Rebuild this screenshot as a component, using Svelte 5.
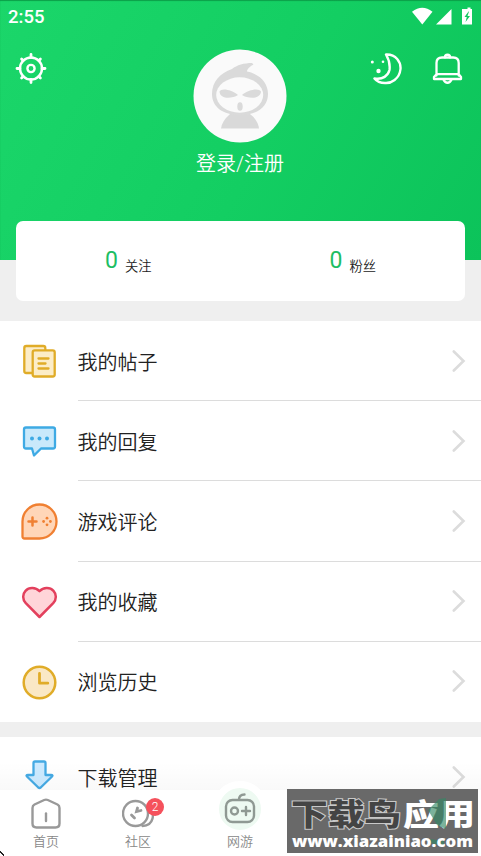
<script lang="ts">
  type Item = { icon: string; label: string };

  const items: Item[] = [
    { icon: 'posts', label: '我的帖子' },
    { icon: 'reply', label: '我的回复' },
    { icon: 'review', label: '游戏评论' },
    { icon: 'heart', label: '我的收藏' },
    { icon: 'history', label: '浏览历史' }
  ];
  const more: Item[] = [{ icon: 'download', label: '下载管理' }];
  const stats = [
    { value: 0, label: '关注' },
    { value: 0, label: '粉丝' }
  ];
</script>

{#snippet row(item: Item)}
  <div class="item">
    <svg class="item-icon" width="40" height="40" viewBox="0 0 40 40" fill="none" stroke-width="2.3" stroke-linecap="round" stroke-linejoin="round">
      {#if item.icon === 'posts'}
        <g stroke="#e0ac28" fill="#fcedc8">
          <rect x="4.300" y="5" width="21" height="27" rx="2" />
          <rect x="12.700" y="9.300" width="22" height="26.200" rx="2" />
          <path d="M18.500 17.500h10M18.500 22.500h7M18.500 27.500h10" stroke-width="2.3" />
        </g>
      {:else if item.icon === 'reply'}
        <path d="M6 6.500h27q2 0 2 2v17q0 2-2 2H21L14 34.500l-2-7H6q-2 0-2-2v-17q0-2 2-2z" fill="#c9e9fb" stroke="#3eaae4" />
        <g fill="#3eaae4"><circle cx="12" cy="17.500" r="2" /><circle cx="19.500" cy="17.500" r="2" /><circle cx="27" cy="17.500" r="2" /></g>
      {:else if item.icon === 'review'}
        <path d="M2.500 20.500a17 17 0 1 1 17 17h-15q-2 0-2-2z" fill="#ffd6b8" stroke="#f08032" />
        <path d="M8.500 20.500h8M12.500 16.500v8" stroke="#f08032" stroke-width="2.500" />
        <g fill="#f08032"><circle cx="27" cy="17.200" r="1.400" /><circle cx="27" cy="23.800" r="1.400" /><circle cx="23.600" cy="20.500" r="1.400" /><circle cx="30.400" cy="20.500" r="1.400" /></g>
      {:else if item.icon === 'heart'}
        <path d="M19.500 35L5.800 21.200C2.200 17.200 2.500 12 5.500 8.800C9.300 4.900 15.600 5.300 19.500 9.200C23.400 5.300 29.700 4.900 33.500 8.800C36.500 12 36.800 17.200 33.200 21.200z" fill="#ffd5d9" stroke="#e3405d" stroke-width="2.500" />
      {:else if item.icon === 'history'}
        <circle cx="19.500" cy="20.500" r="15.800" fill="#fae8c5" stroke="#e0ac28" stroke-width="2.500" />
        <path d="M19.500 11.500v9.700h8.300" stroke="#e0ac28" stroke-width="2.800" />
      {:else}
        <path d="M15 4.500h9q1.500 0 1.500 1.500v12H31q2.500 0 .8 1.700L20.700 30.500q-1.200 1-2.400 0L7.200 19.700Q5.500 18 8 18h5.500V6q0-1.500 1.500-1.500z" fill="#cdeaff" stroke="#45aae4" />
      {/if}
    </svg>
    <div class="item-main">
      <span>{item.label}</span>
      <svg class="arrow" width="14" height="24" viewBox="0 0 14 24" fill="none" stroke="#dcdcdc" stroke-width="2.600" stroke-linecap="round">
        <path d="M1.800 2.500L11.500 12L1.800 21.500" />
      </svg>
    </div>
  </div>
{/snippet}

<div class="page">
  <header class="hero">
    <div class="status">
      <span>2:55</span>
      <svg width="61" height="18" viewBox="0 0 61 18" fill="#fff">
        <path d="M0 3.700Q10.300-4 20.500 3.700L10.300 16.500z" />
        <path d="M39.500 1v15.500H24z" />
        <path d="M52 1h3.500v-1.500h3V1h1.500v15.500H50V1z" />
        <path d="M56.500 3.500L52.500 9h2.300L53.500 14l4.500-6h-2.500l1.500-4.500z" fill="#12c860" />
      </svg>
    </div>

    <div class="top">
      <svg class="gear" width="32" height="32" viewBox="0 0 32 32" fill="none" stroke="#fff" stroke-width="2.400" stroke-linecap="round">
        <circle cx="16" cy="15.500" r="11" />
        <circle cx="16" cy="15.500" r="3.600" />
        <path d="M16 4.500V1.500M16 26.500v3M5 15.500H2M27 15.500h3M8.200 7.700L6.600 6.100M23.800 7.700l1.600-1.600M8.200 23.300l-1.600 1.600M23.800 23.300l1.600 1.600" stroke-width="2.800" />
      </svg>

      <div class="user">
        <svg width="94" height="94" viewBox="0 0 94 94">
          <circle cx="47" cy="47" r="46.500" fill="#fafafa" />
          <path d="M28 79.500Q29 72 37 65h20Q65 71 66 79.500z" fill="#d9d9d9" />
          <path d="M59 14C51 14 44 16 39 20C27 24 19 33 19 45C19 58 30 66 47 66S75 58 75 45C75 34 67 25 54 22.500C54 20 57 17.500 60.500 15.500z" fill="#dadada" />
          <ellipse cx="46.700" cy="46" rx="23.500" ry="17.700" fill="#fafafa" />
          <path d="M26.500 42.500C28 38.500 39 40.500 45 46C39 50 27 50.500 26.500 42.500zM68 42.500C66 38.500 55 40.500 49 46C55 50 67.500 50.500 68 42.500z" fill="#dadada" />
          <ellipse cx="47" cy="57.500" rx="2.700" ry="4.300" fill="#dadada" />
        </svg>
        <span>登录/注册</span>
      </div>

      <div class="tools">
        <svg width="32" height="32" viewBox="0 0 32 32" fill="none" stroke="#fff" stroke-width="2.400" stroke-linecap="round" stroke-linejoin="round">
          <path d="M16 1.500C26 1 31 9 30.500 16C29.500 26 21 30.500 15 30Q8 30 4.500 25.500C13 27 18 22.500 19.500 17Q20.500 9 16 1.500z" />
          <g fill="#fff" stroke="none"><circle cx="2.300" cy="9" r="1.500" /><circle cx="13" cy="8.800" r="1.300" /><circle cx="8.500" cy="18" r="2.200" /></g>
        </svg>
        <svg width="32" height="32" viewBox="0 0 32 32" fill="none" stroke="#fff" stroke-width="2.300" stroke-linecap="round" stroke-linejoin="round">
          <path d="M4.500 22.500V10q0-5.500 5.500-5.500h11.200q5.500 0 5.500 5.500v12.500M4.500 21.200h22.200M4.500 21.200L2 24v2h27v-2l-2.300-2.800" />
          <path d="M13 4.200q0-2.500 2.500-2.500t2.500 2.500M11.500 26.500q1.500 3.200 4 3.200t4-3.200" stroke-width="2.400" />
        </svg>
      </div>
    </div>
  </header>

  <section class="stats">
    {#each stats as stat}
      <div class="stat"><b>{stat.value}</b><span>{stat.label}</span></div>
    {/each}
  </section>

  <section class="list">
    {#each items as item}
      {@render row(item)}
    {/each}
  </section>
  <section class="list">
    {#each more as item}
      {@render row(item)}
    {/each}
  </section>

  <nav class="nav">
    <div class="fade"></div>
    <div class="bar">
      <div class="tab">
        <svg width="32" height="32" viewBox="0 0 32 32" fill="none" stroke="#999" stroke-width="2.400" stroke-linecap="round" stroke-linejoin="round">
          <path d="M14.200 2L4.500 6.500Q2.500 7.500 2.500 10V25.500q0 4 4 4h19q4 0 4-4V10Q29.500 7.500 27.500 6.500L17.800 2q-1.800-.8-3.600 0z" />
          <path d="M16 15.500v7.500" />
        </svg>
        <span>首页</span>
      </div>
      <div class="tab">
        <svg width="32" height="32" viewBox="0 0 32 32" fill="none" stroke="#999" stroke-width="2.400" stroke-linecap="round">
          <path d="M27 9.500C33.500 15 32 27.500 20.500 28" />
          <circle cx="13.500" cy="15.500" r="12.500" fill="#fff" />
          <path d="M9.500 17l3 3M15.500 10l-1 3.500 4.500-1" stroke-width="2.800" />
        </svg>
        <span>社区</span>
        <i class="badge">2</i>
      </div>
      <div class="tab game">
        <div class="bubble"></div>
        <svg width="32" height="32" viewBox="0 0 32 32" fill="none" stroke="#8f9993" stroke-width="2.400" stroke-linecap="round">
          <rect x="2" y="8" width="28" height="22" rx="6.500" fill="#eefaf2" />
          <path d="M15 7.500c0-3 1.500-5 5.500-5M22 15v8M18 19h8" />
          <circle cx="10.500" cy="19" r="3.500" />
        </svg>
        <span>网游</span>
      </div>
    </div>
  </nav>

  <div class="mark">
    <svg width="191" height="64" viewBox="0 0 191 64">
      <g class="mark-title">
        <text x="4" y="36" textLength="110" lengthAdjust="spacingAndGlyphs" fill="#444" stroke="#c8c8c8" stroke-width="2" paint-order="stroke">下载鸟</text>
        <text x="116" y="36" textLength="72" lengthAdjust="spacingAndGlyphs" fill="#fff">应用</text>
      </g>
      <path d="M141 21l11-11 7-1v31l-9-4zM143 50l14 2v5l-14-3z" fill="#348866" opacity=".65" />
      <text class="mark-url" x="5" y="58" textLength="181" lengthAdjust="spacingAndGlyphs" fill="#fff">www.xiazainiao.com</text>
    </svg>
  </div>
  <svg class="corner" width="5" height="5" viewBox="0 0 5 5"><path d="M0 0h1v1h1v1h1v1h1v2h-1v-1h-1v-1h-1v-1h-1z" fill="#222" /></svg>
</div>

<style>
  :global(body) { margin: 0; overflow: hidden; }
  .page { position: relative; box-sizing: border-box; height: 856px; overflow: hidden; background: #efefef; color: #222; font-family: Roboto, "Noto Sans CJK SC", sans-serif; font-weight: 350; }

  .hero { height: 260px; background: linear-gradient(120deg, #1bd66a 0%, #13ce62 55%, #0cc35a 100%); color: #fff; box-shadow: inset 0 1px 1px #0c9f49; }
  .status { display: flex; justify-content: space-between; align-items: center; height: 34px; padding: 0 8px; font-size: 18.500px; font-weight: 500; }
  .status span { margin-top: -1px; }
  .status svg { margin: -1px 0 0; overflow: visible; }
  .top { display: grid; grid-template-columns: 1fr 94px 1fr; padding: 15px 16px 0 15px; }
  .gear { margin-top: 4px; }
  .user { display: flex; flex-direction: column; align-items: center; gap: 7px; font-size: 20px; line-height: 29px; white-space: nowrap; }
  .tools { display: flex; justify-content: flex-end; gap: 30px; margin-top: 4px; margin-right: 1px; }

  .stats { position: relative; display: flex; height: 80px; margin: -39px 16px 20px; background: #fff; border-radius: 7px; }
  .stat { flex: 1; display: flex; justify-content: center; align-items: baseline; gap: 7px; padding-top: 26px; font-size: 13.300px; }
  .stat span { position: relative; top: 3px; }
  .stat b { color: #1dbe64; font-size: 23px; font-weight: 400; }

  .list { background: #fff; margin-bottom: 15px; }
  .item { display: flex; align-items: center; height: 80.200px; padding-left: 20px; }
  .item-icon { flex: none; margin-right: 17.500px; }
  .item-main { flex: 1; display: flex; align-items: center; justify-content: space-between; box-sizing: border-box; height: 100%; padding-right: 15px; border-bottom: 1px solid #dcdcdc; font-size: 20px; }
  .item-main span { padding-top: 1px; }
  .item:last-child .item-main { border-bottom-color: transparent; }

  .nav { position: absolute; left: 0; right: 0; bottom: 0; }
  .fade { height: 28px; background: linear-gradient(rgba(0, 0, 0, 0), rgba(0, 0, 0, .025)); }
  .bar { display: flex; height: 66px; padding-left: 1px; background: #fff; }
  .tab { position: relative; display: flex; flex-direction: column; align-items: center; width: 90px; padding-top: 8px; color: #888; font-size: 13px; line-height: 19px; }
  .tab + .tab { margin-left: 2px; }
  .tab svg { position: relative; margin-bottom: 2px; }
  .tab span { position: relative; }
  .badge { position: absolute; left: 53px; top: 8px; width: 18px; height: 18px; border-radius: 50%; background: #f5515c; color: #fff; font-style: normal; font-size: 12px; line-height: 18px; text-align: center; }
  .tab.game { margin-left: 12px; padding-top: 2px; }
  .game svg { margin-bottom: 8px; }
  .bubble { position: absolute; left: 17px; top: -9px; width: 42px; height: 42px; border: 7px solid #fff; border-radius: 50%; background: #eefaf2; }

  .mark { position: absolute; right: 3px; bottom: 3px; width: 191px; height: 64px; background: #696969; }
  .mark-title { font-family: "Noto Sans CJK SC", sans-serif; font-size: 30px; font-weight: 900; }
  .mark-url { font-family: "Open Sans", "DejaVu Sans", sans-serif; font-size: 15px; font-weight: 800; }
  .corner { position: absolute; left: 0; bottom: 0; }
</style>
